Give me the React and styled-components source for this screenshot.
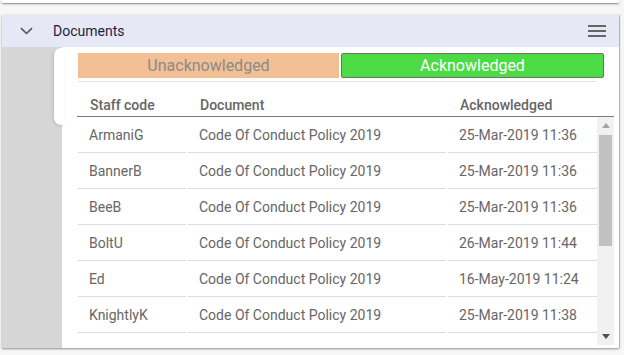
import React from 'react';
import styled, { createGlobalStyle } from 'styled-components';

const GlobalStyle = createGlobalStyle`
  html, body {
    margin: 0;
    padding: 0;
    background: #f6f6f6;
    font-family: Roboto, "Liberation Sans", sans-serif;
  }
`;

const StyledPage = styled.div`
  width: 624px;
  height: 355px;
  overflow: hidden;
  padding-left: 2px;
  box-sizing: border-box;
`;

const StyledPrevPanel = styled.div`
  width: 617px;
  height: 3px;
  background: #fff;
  box-shadow: 0 1px 2px rgba(0, 0, 0, 0.45);
  margin-bottom: 12px;
`;

const StyledPanel = styled.div`
  width: 617px;
  height: 333px;
  background: #fff;
  box-shadow: 0 1px 2px rgba(0, 0, 0, 0.4), 1px 0 1px rgba(0, 0, 0, 0.15);
  display: flex;
  flex-direction: column;
  overflow: hidden;
`;

const StyledHeader = styled.div`
  height: 32px;
  flex: none;
  background: #e6e8f5;
  display: flex;
  align-items: center;
  padding: 0 13px 0 18px;
  color: #1e1e40;
  font-size: 14px;
`;

const StyledTitle = styled.span`
  margin-left: 20px;
  flex: 1;
`;

const StyledBody = styled.div`
  flex: 1;
  display: flex;
  min-height: 0;
`;

const StyledSidebar = styled.div`
  width: 60px;
  flex: none;
  background: #d6d6d6;
`;

const StyledMain = styled.div`
  flex: 1;
  position: relative;
  display: flex;
  flex-direction: column;
  min-width: 0;

  &::before {
    content: '';
    position: absolute;
    left: -8px;
    top: 1px;
    width: 10px;
    height: 77px;
    background: #fff;
    border-radius: 7px 0 0 7px;
    box-shadow: -1px 1px 3px rgba(0, 0, 0, 0.12);
  }
`;

const StyledTabs = styled.div`
  display: grid;
  grid-template-columns: 261px 1fr;
  gap: 2px;
  margin: 6px 15px 0 16px;
  position: relative;
`;

const StyledTab = styled.div`
  height: 25px;
  box-sizing: border-box;
  display: flex;
  align-items: center;
  justify-content: center;
  font-size: 16px;
  background: ${(props) => (props.active ? '#4cdb44' : '#f3c096')};
  color: ${(props) => (props.active ? '#fff' : '#8a8a8a')};
  border: ${(props) => (props.active ? '1px solid #707070' : 'none')};
  border-radius: ${(props) => (props.active ? '2px' : '0')};
`;

const StyledDivider = styled.div`
  height: 1px;
  background: #e4e4e4;
  margin: 3px 22px 0 16px;
`;

const StyledTable = styled.div`
  margin: 0 5px 0 15px;
  display: flex;
  flex-direction: column;
`;

const StyledHeadRow = styled.div`
  height: 35px;
  box-sizing: border-box;
  display: grid;
  grid-template-columns: 110px 260px 1fr;
  align-items: end;
  padding: 0 0 3px 1px;
  border-bottom: 1px solid #7a7a7a;
  color: #666;
  font-size: 14px;
  font-weight: 500;
`;

const StyledHeadCell = styled.div`
  padding-left: 12px;
`;

const StyledScrollArea = styled.div`
  display: flex;
  overflow: hidden;
  height: 228px;
`;

const StyledRows = styled.div`
  flex: 1;
  padding-left: 1px;
`;

const StyledRow = styled.div`
  display: grid;
  grid-template-columns: 108px 258px 1fr;
  column-gap: 2px;
  height: 36px;
`;

const StyledCell = styled.div`
  border-bottom: 1px solid #dcdcdc;
  display: flex;
  align-items: center;
  padding-left: 11px;
  padding-top: 1px;
  color: #666;
  font-size: 14px;
  white-space: nowrap;
`;

const StyledScrollbar = styled.div`
  width: 17px;
  flex: none;
  background: #f1f1f1;
  display: flex;
  flex-direction: column;
  align-items: center;
`;

const StyledArrow = styled.div`
  height: 17px;
  display: flex;
  align-items: center;
  justify-content: center;
  flex: none;
`;

const StyledThumb = styled.div`
  width: 13px;
  height: 111px;
  background: #c1c1c1;
  margin-top: 1px;
`;

const StyledSpacer = styled.div`
  flex: 1;
`;

const rows = [
  ['ArmaniG', 'Code Of Conduct Policy 2019', '25-Mar-2019 11:36'],
  ['BannerB', 'Code Of Conduct Policy 2019', '25-Mar-2019 11:36'],
  ['BeeB', 'Code Of Conduct Policy 2019', '25-Mar-2019 11:36'],
  ['BoltU', 'Code Of Conduct Policy 2019', '26-Mar-2019 11:44'],
  ['Ed', 'Code Of Conduct Policy 2019', '16-May-2019 11:24'],
  ['KnightlyK', 'Code Of Conduct Policy 2019', '25-Mar-2019 11:38'],
  ['LeeS', 'Code Of Conduct Policy 2019', '25-Mar-2019 11:40'],
];

const Chevron = () => (
  <svg width="13" height="8" viewBox="0 0 13 8">
    <path d="M1 1.2 L6.5 6.5 L12 1.2" fill="none" stroke="#555" strokeWidth="1.6" />
  </svg>
);

const Hamburger = () => (
  <svg width="18" height="12" viewBox="0 0 18 12">
    <rect x="0" y="0" width="18" height="2" fill="#666" />
    <rect x="0" y="5" width="18" height="2" fill="#666" />
    <rect x="0" y="10" width="18" height="2" fill="#666" />
  </svg>
);

const Triangle = ({ down }) => (
  <svg width="8" height="5" viewBox="0 0 8 5">
    <path d={down ? 'M0 0 L8 0 L4 5 Z' : 'M0 5 L8 5 L4 0 Z'} fill={down ? '#505050' : '#a3a3a3'} />
  </svg>
);

export default function App() {
  return (
    <StyledPage>
      <GlobalStyle />
      <StyledPrevPanel />
      <StyledPanel>
        <StyledHeader>
          <Chevron />
          <StyledTitle>Documents</StyledTitle>
          <Hamburger />
        </StyledHeader>
        <StyledBody>
          <StyledSidebar />
          <StyledMain>
            <StyledTabs>
              <StyledTab>Unacknowledged</StyledTab>
              <StyledTab active>Acknowledged</StyledTab>
            </StyledTabs>
            <StyledDivider />
            <StyledTable>
              <StyledHeadRow>
                <StyledHeadCell>Staff code</StyledHeadCell>
                <StyledHeadCell>Document</StyledHeadCell>
                <StyledHeadCell>Acknowledged</StyledHeadCell>
              </StyledHeadRow>
              <StyledScrollArea>
                <StyledRows>
                  {rows.map((row) => (
                    <StyledRow key={row[0]}>
                      {row.map((value, i) => (
                        <StyledCell key={i}>{value}</StyledCell>
                      ))}
                    </StyledRow>
                  ))}
                </StyledRows>
                <StyledScrollbar>
                  <StyledArrow>
                    <Triangle />
                  </StyledArrow>
                  <StyledThumb />
                  <StyledSpacer />
                  <StyledArrow>
                    <Triangle down />
                  </StyledArrow>
                </StyledScrollbar>
              </StyledScrollArea>
            </StyledTable>
          </StyledMain>
        </StyledBody>
      </StyledPanel>
    </StyledPage>
  );
}
